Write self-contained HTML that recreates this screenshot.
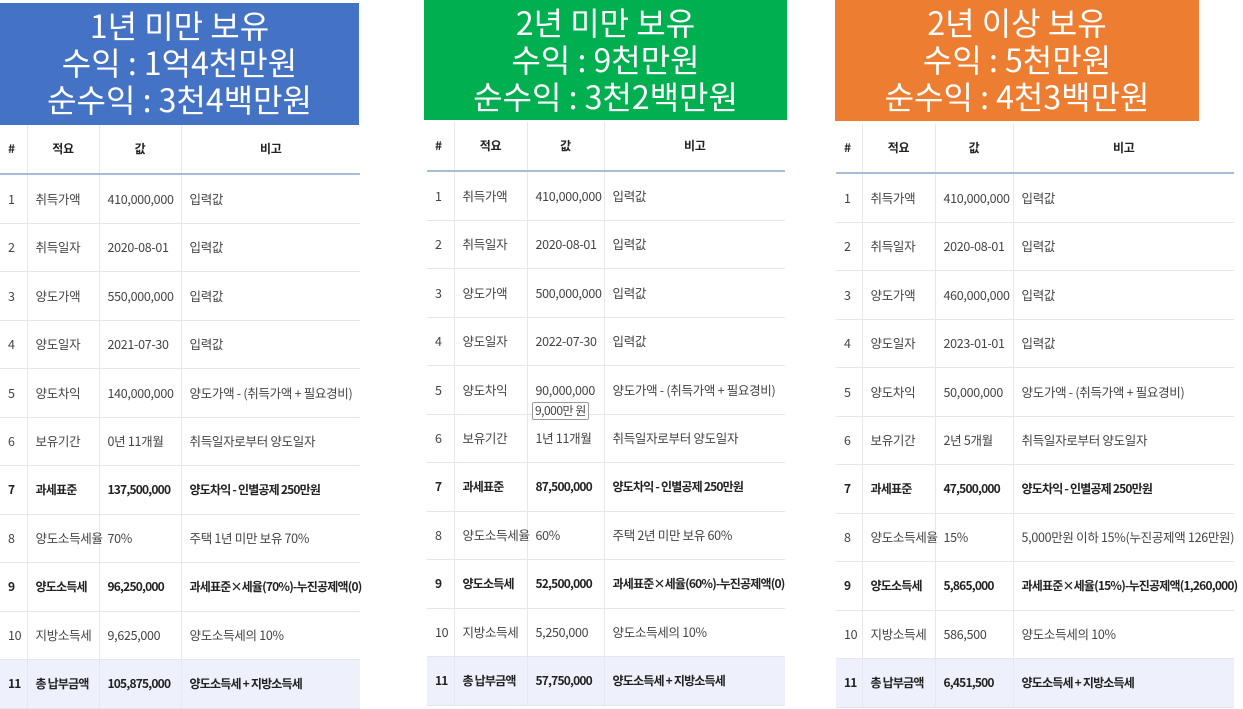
<!DOCTYPE html>
<html><head><meta charset="utf-8"><style>
body{margin:0;width:1243px;height:703px;overflow:hidden;background:#fff;font-family:"Noto Sans CJK KR","Liberation Sans",sans-serif;position:relative}
.hd{position:absolute;color:#fff;text-align:center;font-size:32px;line-height:37px;padding-top:4px;box-sizing:border-box;font-family:"Noto Sans CJK KR","Liberation Sans",sans-serif;font-weight:400}
table{position:absolute;border-collapse:collapse;table-layout:fixed;font-size:12.5px;color:#444;font-family:"Noto Sans CJK KR","Liberation Sans",sans-serif}
td,th{border-bottom:1px solid #e3e6ec;border-right:1px solid #e6e8ee;padding:0 0 0 8px;height:47.5px;white-space:nowrap;overflow:visible;letter-spacing:-0.3px;line-height:16px;vertical-align:middle}
td:last-child,th:last-child{border-right:none}
th{font-weight:bold;color:#222;text-align:center;padding:0;height:48px;border-bottom:2px solid #a6bcd8;font-size:12px}
th:first-child{text-align:left;padding-left:8px}
tr.b td{font-weight:bold;color:#222;letter-spacing:-0.8px;font-size:12px}
tr.t td{background:#eef0fb}
.tip{position:absolute;border:1px solid #999;border-radius:2px;font-size:12px;color:#444;padding:0 2px;background:#fff;line-height:16px;letter-spacing:-0.5px}
</style></head><body>
<div class="hd" style="left:0;top:3px;width:359px;height:122px;background:#4472c4">1년 미만 보유<br>수익 : 1억4천만원<br>순수익 : 3천4백만원</div>
<div class="hd" style="left:424px;top:0;width:363px;height:120px;background:#00b050">2년 미만 보유<br>수익 : 9천만원<br>순수익 : 3천2백만원</div>
<div class="hd" style="left:835px;top:0;width:364px;height:121px;background:#ed7d31">2년 이상 보유<br>수익 : 5천만원<br>순수익 : 4천3백만원</div>

<table style="left:0;top:125px;width:360px">
<colgroup><col style="width:27px"><col style="width:72px"><col style="width:82px"><col></colgroup>
<tr><th>#</th><th>적요</th><th>값</th><th>비고</th></tr>
<tr><td>1</td><td>취득가액</td><td>410,000,000</td><td>입력값</td></tr>
<tr><td>2</td><td>취득일자</td><td>2020-08-01</td><td>입력값</td></tr>
<tr><td>3</td><td>양도가액</td><td>550,000,000</td><td>입력값</td></tr>
<tr><td>4</td><td>양도일자</td><td>2021-07-30</td><td>입력값</td></tr>
<tr><td>5</td><td>양도차익</td><td>140,000,000</td><td>양도가액 - (취득가액 + 필요경비)</td></tr>
<tr><td>6</td><td>보유기간</td><td>0년 11개월</td><td>취득일자로부터 양도일자</td></tr>
<tr class="b"><td>7</td><td>과세표준</td><td>137,500,000</td><td>양도차익 - 인별공제 250만원</td></tr>
<tr><td>8</td><td>양도소득세율</td><td>70%</td><td>주택 1년 미만 보유 70%</td></tr>
<tr class="b"><td>9</td><td>양도소득세</td><td>96,250,000</td><td>과세표준×세율(70%)-누진공제액(0)</td></tr>
<tr><td>10</td><td>지방소득세</td><td>9,625,000</td><td>양도소득세의 10%</td></tr>
<tr class="b t"><td>11</td><td>총 납부금액</td><td>105,875,000</td><td>양도소득세 + 지방소득세</td></tr>
</table>

<table style="left:427px;top:122px;width:358px">
<colgroup><col style="width:27px"><col style="width:73px"><col style="width:77px"><col></colgroup>
<tr><th>#</th><th>적요</th><th>값</th><th>비고</th></tr>
<tr><td>1</td><td>취득가액</td><td>410,000,000</td><td>입력값</td></tr>
<tr><td>2</td><td>취득일자</td><td>2020-08-01</td><td>입력값</td></tr>
<tr><td>3</td><td>양도가액</td><td>500,000,000</td><td>입력값</td></tr>
<tr><td>4</td><td>양도일자</td><td>2022-07-30</td><td>입력값</td></tr>
<tr><td>5</td><td>양도차익</td><td>90,000,000</td><td>양도가액 - (취득가액 + 필요경비)</td></tr>
<tr><td>6</td><td>보유기간</td><td>1년 11개월</td><td>취득일자로부터 양도일자</td></tr>
<tr class="b"><td>7</td><td>과세표준</td><td>87,500,000</td><td>양도차익 - 인별공제 250만원</td></tr>
<tr><td>8</td><td>양도소득세율</td><td>60%</td><td>주택 2년 미만 보유 60%</td></tr>
<tr class="b"><td>9</td><td>양도소득세</td><td>52,500,000</td><td>과세표준×세율(60%)-누진공제액(0)</td></tr>
<tr><td>10</td><td>지방소득세</td><td>5,250,000</td><td>양도소득세의 10%</td></tr>
<tr class="b t"><td>11</td><td>총 납부금액</td><td>57,750,000</td><td>양도소득세 + 지방소득세</td></tr>
</table>
<div class="tip" style="left:532px;top:402px">9,000만 원</div>

<table style="left:836px;top:124px;width:398px">
<colgroup><col style="width:26px"><col style="width:73px"><col style="width:78px"><col></colgroup>
<tr><th>#</th><th>적요</th><th>값</th><th>비고</th></tr>
<tr><td>1</td><td>취득가액</td><td>410,000,000</td><td>입력값</td></tr>
<tr><td>2</td><td>취득일자</td><td>2020-08-01</td><td>입력값</td></tr>
<tr><td>3</td><td>양도가액</td><td>460,000,000</td><td>입력값</td></tr>
<tr><td>4</td><td>양도일자</td><td>2023-01-01</td><td>입력값</td></tr>
<tr><td>5</td><td>양도차익</td><td>50,000,000</td><td>양도가액 - (취득가액 + 필요경비)</td></tr>
<tr><td>6</td><td>보유기간</td><td>2년 5개월</td><td>취득일자로부터 양도일자</td></tr>
<tr class="b"><td>7</td><td>과세표준</td><td>47,500,000</td><td>양도차익 - 인별공제 250만원</td></tr>
<tr><td>8</td><td>양도소득세율</td><td>15%</td><td>5,000만원 이하 15%(누진공제액 126만원)</td></tr>
<tr class="b"><td>9</td><td>양도소득세</td><td>5,865,000</td><td>과세표준×세율(15%)-누진공제액(1,260,000)</td></tr>
<tr><td>10</td><td>지방소득세</td><td>586,500</td><td>양도소득세의 10%</td></tr>
<tr class="b t"><td>11</td><td>총 납부금액</td><td>6,451,500</td><td>양도소득세 + 지방소득세</td></tr>
</table>
</body></html>
